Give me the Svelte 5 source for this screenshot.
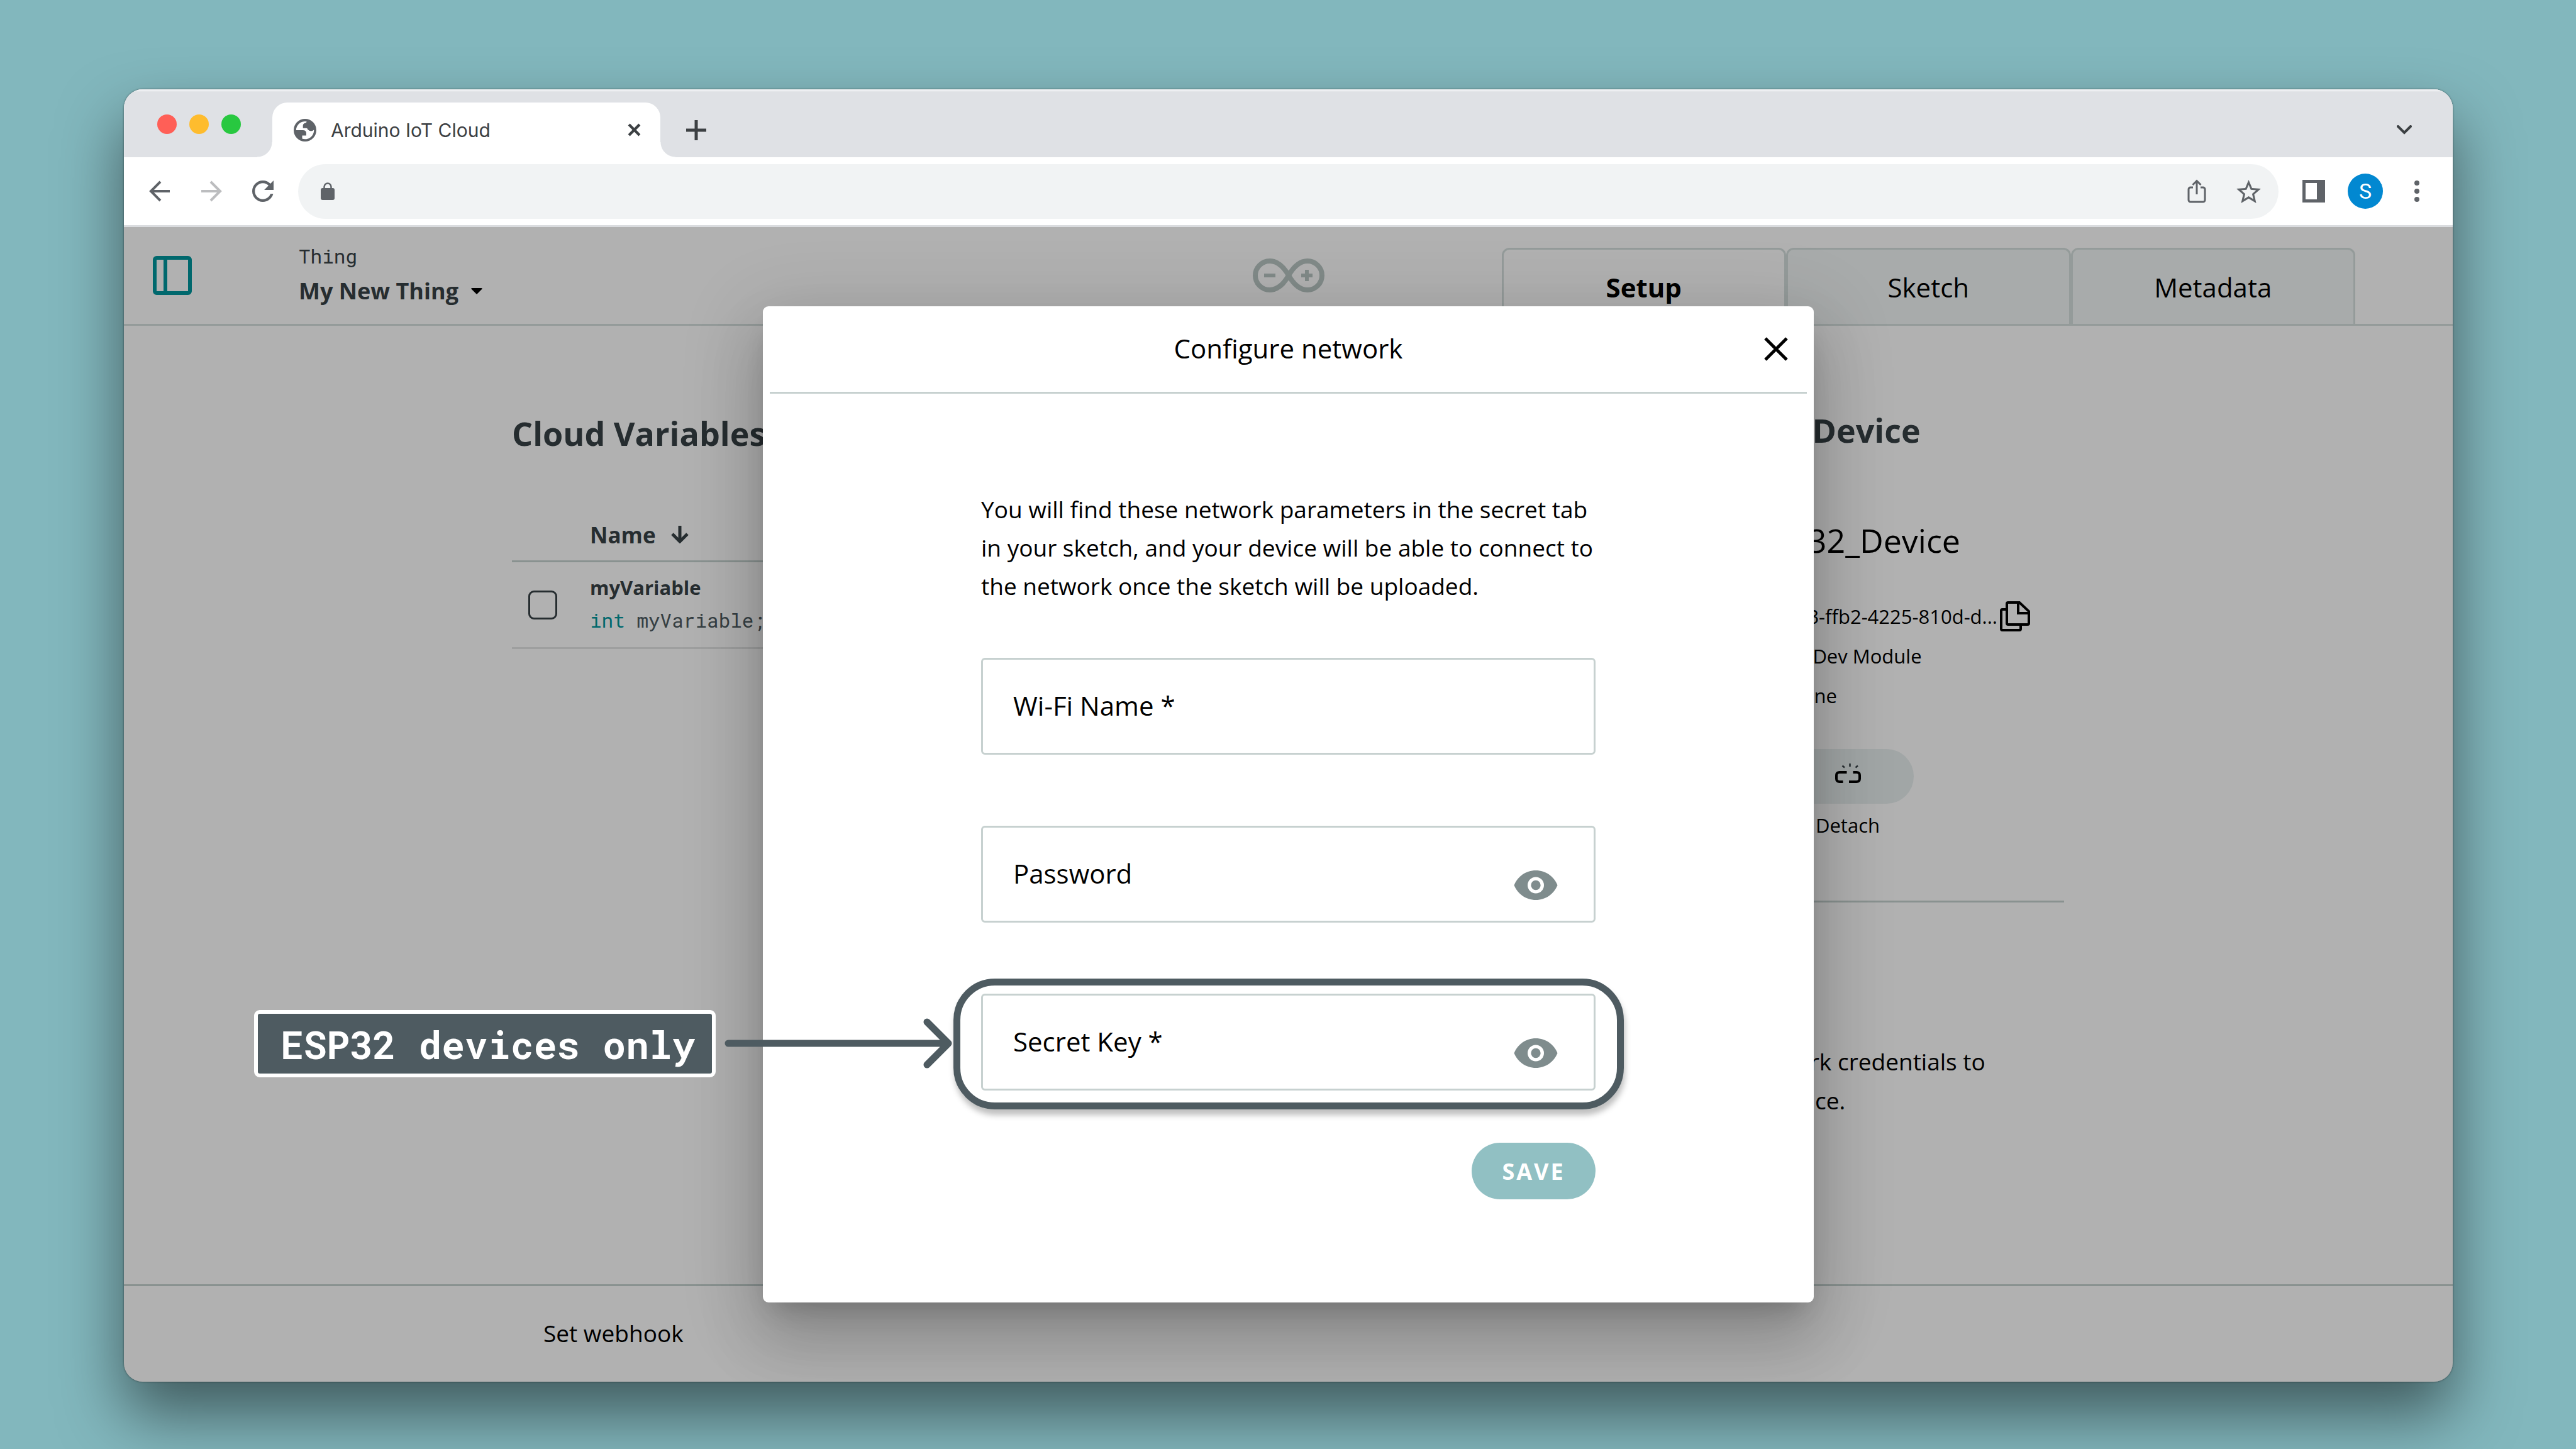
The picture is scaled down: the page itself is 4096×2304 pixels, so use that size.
<script>
  const tabs = ['Setup', 'Sketch', 'Metadata'];
  let active = $state('Setup');
  let wifi = $state('');
  let password = $state('');
  let secret = $state('');
  let showPassword = $state(false);
  let showSecret = $state(false);
</script>

{#snippet eye()}
  <svg class="eye" viewBox="1 4.5 22 15" aria-hidden="true">
    <path
      fill="currentColor"
      d="M12 4.500C7 4.500 2.730 7.610 1 12c1.730 4.390 6 7.500 11 7.500s9.270-3.110 11-7.500c-1.730-4.390-6-7.500-11-7.500z"
    />
    <circle cx="12" cy="12" r="3.300" fill="none" stroke="#fff" stroke-width="1.700" />
  </svg>
{/snippet}

<div class="desktop">
  <div class="window">
    <div class="tabstrip">
      <div class="lights">
        <i class="red"></i><i class="amber"></i><i class="green"></i>
      </div>
      <div class="browser-tab">
        <svg class="globe" viewBox="0 0 36 36" aria-hidden="true">
          <circle cx="18" cy="18" r="18" fill="#5f6368" />
          <path
            fill="#fff"
            d="M3.800 18A14.200 14.200 0 0 1 20.600 4.200L20 6Q15 7 14.700 10.400V14.700H20Q22 14.700 22.300 17Q27 21.500 32.200 17.500A14.200 14.200 0 0 1 13.500 31.600V26.500H20V22.300Q19.500 18 14.700 18Z"
          />
        </svg>
        <span class="tab-title">Arduino IoT Cloud</span>
        <button class="plain" aria-label="Close tab">
          <svg class="tab-close" viewBox="0 0 20 20"><path d="M2 2l16 16M18 2L2 18" /></svg>
        </button>
      </div>
      <button class="plain" aria-label="New tab">
        <svg class="tab-new" viewBox="0 0 32 32"><path d="M16 0v32M0 16h32" /></svg>
      </button>
      <button class="plain tab-search" aria-label="Search tabs">
        <svg viewBox="0 0 24 16"><path d="M2 2l10 10L22 2" /></svg>
      </button>
    </div>

    <div class="toolbar">
      <button class="plain" aria-label="Back">
        <svg class="nav" viewBox="0 0 34 34"><path d="M33 17H3M18 2L3 17l15 15" /></svg>
      </button>
      <button class="plain" aria-label="Forward">
        <svg class="nav dim" viewBox="0 0 34 34"><path d="M1 17h30M16 2l15 15-15 15" /></svg>
      </button>
      <button class="plain" aria-label="Reload">
        <svg class="nav" viewBox="4 4 16 16">
          <path
            class="solid"
            d="M17.650 6.350C16.200 4.900 14.210 4 12 4c-4.420 0-7.990 3.580-7.990 8s3.570 8 7.990 8c3.730 0 6.840-2.550 7.730-6h-2.080c-.820 2.330-3.040 4-5.650 4-3.310 0-6-2.690-6-6s2.690-6 6-6c1.660 0 3.140.690 4.220 1.780L13 11h7V4l-2.350 2.350z"
          />
        </svg>
      </button>
      <div class="omnibox">
        <svg class="lock" viewBox="0 0 22 28" aria-hidden="true">
          <rect x="0" y="9" width="22" height="19" rx="3" fill="#5f6368" />
          <path d="M5.500 10V7a5.500 5.500 0 0 1 11 0v3" fill="none" stroke="#5f6368" stroke-width="2.500" />
        </svg>
        <input class="address" type="text" aria-label="Address" />
        <button class="plain" aria-label="Share">
          <svg class="share" viewBox="0 0 30 38">
            <path d="M9 13H5a3 3 0 0 0-3 3v17a3 3 0 0 0 3 3h20a3 3 0 0 0 3-3V16a3 3 0 0 0-3-3h-4M15 24V3M8.500 9L15 2.500 21.500 9" />
          </svg>
        </button>
        <button class="plain" aria-label="Bookmark">
          <svg class="star" viewBox="2 2 20 19">
            <path
              d="M22 9.240l-7.190-.620L12 2 9.190 8.630 2 9.240l5.460 4.730L5.820 21 12 17.270 18.180 21l-1.630-7.030L22 9.240zM12 15.400l-3.760 2.270 1-4.280-3.320-2.880 4.380-.380L12 6.100l1.710 4.040 4.380.380-3.320 2.880 1 4.280L12 15.400z"
            />
          </svg>
        </button>
      </div>
      <button class="plain" aria-label="Side panel">
        <svg class="panel" viewBox="0 0 36 36">
          <path d="M0 0h36v36H0zM5 5v26h18V5z" fill="#5f6368" fill-rule="evenodd" />
        </svg>
      </button>
      <button class="avatar" aria-label="Profile S">S</button>
      <button class="plain" aria-label="Menu">
        <svg class="dots" viewBox="0 0 8 34">
          <circle cx="4" cy="4" r="4" /><circle cx="4" cy="17" r="4" /><circle cx="4" cy="30" r="4" />
        </svg>
      </button>
    </div>

    <div class="page">
      <header class="top">
        <div class="brand">
          <button class="plain" aria-label="Toggle sidebar">
            <svg class="sidebar" viewBox="0 0 62 62">
              <rect x="3" y="3" width="56" height="56" rx="3" />
              <path d="M20 3v56" />
            </svg>
          </button>
          <div class="crumb">
            <div class="kind">Thing</div>
            <button class="plain thing">
              My New Thing
              <svg class="caret" viewBox="0 0 18 10" aria-hidden="true"><path d="M2 0h14q3 0 1 2l-7 7q-1 1-2 0L1 2q-2-2 1-2z" /></svg>
            </button>
          </div>
        </div>
        <svg class="logo" viewBox="0 0 116 54" aria-hidden="true">
          <path d="M58 27C50 13 40 4 28 4a23 23 0 0 0 0 46C40 50 50 41 58 27zM58 27C66 13 76 4 88 4a23 23 0 0 1 0 46C76 50 66 41 58 27z" stroke-width="8" />
          <path d="M19 27h18M78 27h18M87 18v18" stroke-width="6" />
        </svg>
        <nav class="tabs">
          {#each tabs as tab}
            <button class:active={tab === active} onclick={() => (active = tab)}>{tab}</button>
          {/each}
        </nav>
      </header>

      <main>
        <section class="variables">
          <h2>Cloud Variables</h2>
          <table>
            <thead>
              <tr>
                <th class="pick"></th>
                <th>
                  <span class="sort">
                    Name
                    <svg viewBox="0 0 28 28" aria-hidden="true"><path d="M14 0v25M2 13l12 12 12-12" /></svg>
                  </span>
                </th>
              </tr>
            </thead>
            <tbody>
              <tr>
                <td class="pick"><input type="checkbox" aria-label="Select myVariable" /></td>
                <td>
                  <div class="var-name">myVariable</div>
                  <code><b>int</b> myVariable;</code>
                </td>
              </tr>
            </tbody>
          </table>
        </section>

        <aside>
          <h2>Associated Device</h2>
          <div class="device">
            <h3>ESP32_Device</h3>
            <div class="row">
              <span>ffa7c53-ffb2-4225-810d-d...</span>
              <button class="plain" aria-label="Copy ID">
                <svg class="copy" viewBox="0 0 48 48">
                  <path d="M11 13H4q-2 0-2 2v29q0 2 2 2h27q2 0 2-2v-6M13 2h18l15 14v19q0 2-2 2H13q-2 0-2-2V4q0-2 2-2zM29 2v17h17" />
                </svg>
              </button>
            </div>
            <div class="row">ESP32 Dev Module</div>
            <div class="row status"><i></i>Offline</div>
            <div class="detach">
              <button aria-label="Detach">
                <svg viewBox="0 0 41 31">
                  <path d="M18.500 14H7q-5 0-5 5v5q0 5 5 5h5.500M28.500 14H34q5 0 5 5v5q0 5-5 5H22" stroke-width="4" />
                  <path class="spark" d="M23.500 0v5M11.500 3.500l3.500 3M36 3.500l-3.500 3" stroke-width="2.500" />
                </svg>
              </button>
              <span>Detach</span>
            </div>
          </div>
          <hr />
          <p>Enter your network credentials to connect your device.</p>
        </aside>
      </main>

      <footer><a href="#webhook">Set webhook</a></footer>

      <div class="backdrop">
        <div class="modal" role="dialog" aria-labelledby="modal-title">
          <div class="modal-head">
            <h1 id="modal-title">Configure network</h1>
            <button class="plain close" aria-label="Close">
              <svg viewBox="0 0 38 38"><path d="M2 2l34 34M36 2L2 36" /></svg>
            </button>
          </div>
          <form>
            <p>
              You will find these network parameters in the secret tab in your sketch, and your device
              will be able to connect to the network once the sketch will be uploaded.
            </p>
            <div class="field">
              <input id="wifi" type="text" bind:value={wifi} />
              <label for="wifi" class:filled={wifi}>Wi-Fi Name *</label>
            </div>
            <div class="field">
              <input id="password" type={showPassword ? 'text' : 'password'} bind:value={password} />
              <label for="password" class:filled={password}>Password</label>
              <button type="button" class="plain reveal" aria-label="Show password" onclick={() => (showPassword = !showPassword)}>
                {@render eye()}
              </button>
            </div>
            <div class="field">
              <input id="secret" type={showSecret ? 'text' : 'password'} bind:value={secret} />
              <label for="secret" class:filled={secret}>Secret Key *</label>
              <button type="button" class="plain reveal" aria-label="Show secret key" onclick={() => (showSecret = !showSecret)}>
                {@render eye()}
              </button>
              <div class="ring"></div>
              <div class="callout">
                <strong>ESP32 devices only</strong>
                <svg viewBox="0 0 362 80" aria-hidden="true"><path d="M6 40h348M322 6l34 34-34 34" /></svg>
              </div>
            </div>
            <button type="button" class="save">SAVE</button>
          </form>
        </div>
      </div>
    </div>
  </div>
</div>

<style>
  :global(body) {
    background: #82b7bd;
  }
  * {
    box-sizing: border-box;
  }
  svg {
    display: block;
    fill: none;
    flex: none;
  }
  h1, h2, h3, p {
    margin: 0;
  }
  button {
    font: inherit;
    color: inherit;
    cursor: pointer;
  }
  .plain {
    border: 0;
    padding: 0;
    background: none;
  }
  .desktop {
    min-height: 100vh;
    padding: 142px 196px 107px 197px;
    display: flex;
    font-family: 'Open Sans', 'Noto Sans', sans-serif;
    color: #000;
  }
  .window {
    flex: 1;
    display: flex;
    flex-direction: column;
    border-radius: 30px;
    overflow: hidden;
    background: #fff;
    box-shadow:
      0 0 3px rgba(0, 0, 0, 0.5),
      0 52px 100px rgba(0, 0, 0, 0.5);
  }

  /* browser chrome */
  .tabstrip {
    height: 108px;
    display: flex;
    align-items: center;
    background: #dfe1e5;
    box-shadow: inset 0 3px 2px #f1f2f4;
    padding: 21px 65px 0 53px;
  }
  .lights {
    display: flex;
    gap: 20px;
    margin-bottom: 18px;
    margin-right: 50px;
  }
  .lights i {
    width: 31px;
    height: 31px;
    border-radius: 50%;
  }
  .red { background: #ff5f57; }
  .amber { background: #febc2e; }
  .green { background: #28c840; }
  .browser-tab {
    position: relative;
    align-self: stretch;
    width: 617px;
    display: flex;
    align-items: center;
    background: #fff;
    border-radius: 24px 24px 0 0;
    padding: 0 31px 0 34px;
    margin-right: 41px;
  }
  .browser-tab::before,
  .browser-tab::after {
    content: '';
    position: absolute;
    bottom: 0;
    width: 24px;
    height: 24px;
  }
  .browser-tab::before {
    right: 100%;
    background: radial-gradient(circle at 0 0, transparent 23px, #fff 24px);
  }
  .browser-tab::after {
    left: 100%;
    background: radial-gradient(circle at 100% 0, transparent 23px, #fff 24px);
  }
  .globe {
    width: 36px;
    height: 36px;
  }
  .tab-title {
    flex: 1;
    margin-left: 23px;
    font: 30px/40px Inter, sans-serif;
    color: #3c4043;
  }
  .tab-close,
  .tab-new,
  .tab-search svg {
    stroke: #3c4043;
    stroke-width: 4;
  }
  .tab-close { width: 21px; height: 21px; }
  .tab-new {
    width: 32px;
    height: 32px;
    stroke-width: 5;
  }
  .tab-search {
    margin-left: auto;
  }
  .tab-search svg {
    width: 24px;
    height: 16px;
    stroke-linecap: round;
  }
  .toolbar {
    height: 111px;
    display: flex;
    align-items: center;
    border-bottom: 3px solid #dadcdf;
    padding: 0 53px 0 40px;
  }
  .nav {
    width: 34px;
    height: 34px;
    margin-right: 48px;
    stroke: #5f6368;
    stroke-width: 4;
  }
  .nav.dim { stroke: #bcbdbf; }
  .nav .solid {
    fill: #5f6368;
    stroke: none;
  }
  .omnibox {
    flex: 1;
    height: 87px;
    margin: 0 38px 0 -9px;
    padding: 0 28px 0 36px;
    display: flex;
    align-items: center;
    border-radius: 44px;
    background: #f1f3f4;
  }
  .lock { width: 22px; height: 28px; }
  .address {
    flex: 1;
    min-width: 0;
    height: 60px;
    margin: 0 24px;
    border: 0;
    background: none;
    font: 36px Roboto, sans-serif;
    outline: none;
  }
  .share {
    width: 30px;
    height: 38px;
    margin-right: 48px;
    stroke: #5f6368;
    stroke-width: 3;
  }
  .star {
    width: 39px;
    height: 37px;
    fill: #5f6368;
  }
  .panel {
    width: 36px;
    height: 36px;
  }
  .avatar {
    width: 56px;
    height: 56px;
    margin: 0 50px 0 36px;
    padding: 0;
    border: 0;
    border-radius: 50%;
    background: #0288d1;
    color: #fff;
    font: 34px/56px Roboto, sans-serif;
  }
  .dots {
    width: 8px;
    height: 34px;
    fill: #5f6368;
  }

  /* page */
  .page {
    position: relative;
    flex: 1;
    display: flex;
    flex-direction: column;
  }
  .top {
    height: 157px;
    display: grid;
    grid-template-columns: 1fr 116px 1fr;
    align-items: center;
    border-bottom: 3px solid #d5e0de;
  }
  .brand {
    display: flex;
    align-items: center;
    gap: 170px;
    padding-left: 46px;
  }
  .sidebar {
    width: 62px;
    height: 62px;
    stroke: #00979d;
    stroke-width: 6;
  }
  .crumb {
    padding-top: 6px;
  }
  .kind {
    font: 31px/44px 'Roboto Mono', 'DejaVu Sans Mono', monospace;
    color: #374146;
  }
  .thing {
    display: flex;
    align-items: center;
    gap: 20px;
    font-size: 36px;
    font-weight: 700;
    line-height: 68px;
    color: #374146;
  }
  .caret {
    width: 18px;
    height: 10px;
    fill: #000;
  }
  .logo {
    width: 116px;
    height: 54px;
    stroke: #bac7c5;
  }
  .tabs {
    align-self: end;
    display: flex;
    height: 121px;
    margin: 0 155px 0 281px;
  }
  .tabs button {
    flex: 1;
    border: 3px solid #d5e0de;
    border-bottom: 0;
    border-radius: 12px 12px 0 0;
    background: #f3f7f6;
    font-size: 42px;
  }
  .tabs .active {
    background: #fff;
    font-weight: 700;
  }
  main {
    flex: 1;
    display: grid;
    grid-template-columns: 1fr 702px;
    gap: 166px;
    align-content: start;
    padding: 130px 618px 0 617px;
  }
  h2 {
    font-size: 52px;
    line-height: 72px;
    color: #374146;
  }
  .variables {
    padding-top: 5px;
  }
  table {
    width: 100%;
    margin-top: 84px;
    border-collapse: separate;
    border-spacing: 0;
  }
  th {
    height: 85px;
    padding: 0;
    border-bottom: 3px solid #c6d2d0;
    text-align: left;
    font-size: 35px;
    color: #374146;
  }
  .sort {
    display: flex;
    align-items: center;
    gap: 24px;
  }
  .sort svg {
    width: 28px;
    height: 28px;
    stroke: #374146;
    stroke-width: 5;
  }
  td {
    padding: 18px 0 21px;
    border-bottom: 3px solid #e4e6e6;
    color: #374146;
  }
  .pick {
    width: 124px;
  }
  td.pick {
    padding: 0 0 0 26px;
  }
  .pick input {
    appearance: none;
    display: block;
    width: 46px;
    height: 46px;
    margin: 0;
    border: 3px solid #374146;
    border-radius: 9px;
  }
  .var-name {
    font-size: 31px;
    font-weight: 700;
    line-height: 44px;
  }
  code {
    display: block;
    margin-top: 8px;
    font: 31px/44px 'Roboto Mono', 'DejaVu Sans Mono', monospace;
    color: #4e5b61;
  }
  code b {
    font-weight: 400;
    color: #00979d;
  }
  aside h2 {
    padding-left: 8px;
  }
  .device {
    margin: 103px 0 0 206px;
  }
  h3 {
    margin-bottom: 53px;
    font-size: 52px;
    font-weight: 400;
    line-height: 72px;
  }
  .row {
    display: flex;
    align-items: center;
    gap: 4px;
    height: 63px;
    font-size: 31px;
    white-space: nowrap;
  }
  .copy {
    width: 48px;
    height: 48px;
    stroke: #000;
    stroke-width: 4;
  }
  .status i {
    width: 20px;
    height: 20px;
    margin-right: 14px;
    border-radius: 50%;
    background: #da5b4a;
  }
  .detach {
    width: 210px;
    margin: 54px 0 0 47px;
    display: flex;
    flex-direction: column;
    align-items: center;
    gap: 12px;
    font-size: 31px;
    line-height: 44px;
  }
  .detach button {
    width: 100%;
    height: 87px;
    border: 0;
    border-radius: 44px;
    padding: 0 0 10px;
    background: #e8eff0;
    display: grid;
    place-items: center;
  }
  .detach svg {
    width: 41px;
    height: 31px;
    stroke: #000;
  }
  .detach .spark {
    stroke: #374146;
  }
  hr {
    margin: 98px 0 222px;
    border: 0;
    border-top: 3px solid #c6d2d0;
  }
  aside p {
    font-size: 37px;
    line-height: 62px;
  }
  footer {
    height: 155px;
    display: flex;
    align-items: center;
    border-top: 3px solid #c6d2d0;
    padding: 0 0 3px 667px;
    font-size: 37px;
  }
  footer a {
    color: inherit;
    text-decoration: none;
  }

  /* dialog */
  .backdrop {
    position: absolute;
    inset: 0;
    display: grid;
    place-items: center;
    background: rgba(0, 0, 0, 0.305);
  }
  .modal {
    width: 1671px;
    border-radius: 9px;
    background: #fff;
    box-shadow:
      0 24px 40px -18px rgba(0, 0, 0, 0.2),
      0 62px 99px 8px rgba(0, 0, 0, 0.14),
      0 23px 120px 21px rgba(0, 0, 0, 0.12);
  }
  .modal-head {
    margin: 0 11px;
    height: 139px;
    display: grid;
    grid-template-columns: 1fr auto 1fr;
    align-items: center;
    border-bottom: 3px solid #c7d1d0;
    padding: 0 30px;
  }
  h1 {
    grid-column: 2;
    padding-bottom: 4px;
    font-size: 42px;
    font-weight: 400;
  }
  .close {
    justify-self: end;
  }
  .close svg {
    width: 38px;
    height: 38px;
    stroke: #000;
    stroke-width: 5;
  }
  form {
    display: flex;
    flex-direction: column;
    padding: 153px 347px 164px;
  }
  form p {
    margin-bottom: 84px;
    font-size: 37px;
    line-height: 61px;
  }
  .field {
    position: relative;
    display: grid;
    height: 154px;
    margin-bottom: 113px;
  }
  .field > * {
    grid-area: 1 / 1;
  }
  .field input {
    width: 100%;
    border: 3px solid #c7d1d0;
    border-radius: 6px;
    padding: 0 140px 0 48px;
    background: #fff;
    font: 42px 'Open Sans', sans-serif;
    outline: none;
  }
  .field label {
    align-self: center;
    justify-self: start;
    padding: 0 0 4px 51px;
    font-size: 42px;
    pointer-events: none;
  }
  .field label.filled {
    visibility: hidden;
  }
  .reveal {
    place-self: end;
    margin: 0 60px 36px 0;
    color: #7f8c8d;
  }
  .eye {
    width: 70px;
    height: 47px;
  }
  .ring,
  .callout {
    position: absolute;
    pointer-events: none;
  }
  .ring {
    inset: -24px -45px -30px -44px;
    border: 11px solid #4e5b61;
    border-radius: 66px;
    box-shadow: 2px 9px 10px rgba(0, 0, 0, 0.25);
  }
  .callout {
    right: 100%;
    top: -24px;
    bottom: -28px;
    margin-right: 46px;
    display: flex;
    align-items: center;
    gap: 14px;
  }
  .callout strong {
    border: 6px solid #fff;
    border-radius: 9px;
    padding: 2px 27px 0 36px;
    background: #4e5b61;
    color: #fff;
    font: 700 61px/93px 'Roboto Mono', 'DejaVu Sans Mono', monospace;
    white-space: nowrap;
  }
  .callout svg {
    width: 362px;
    height: 80px;
    stroke: #4e5b61;
    stroke-width: 11;
    stroke-linecap: round;
    stroke-linejoin: round;
  }
  .save {
    align-self: flex-end;
    width: 197px;
    height: 90px;
    margin-top: -30px;
    border: 0;
    border-radius: 45px;
    padding: 0;
    background: #91c0c3;
    color: #fff;
    font-size: 36px;
    font-weight: 700;
    letter-spacing: 3px;
  }
</style>
